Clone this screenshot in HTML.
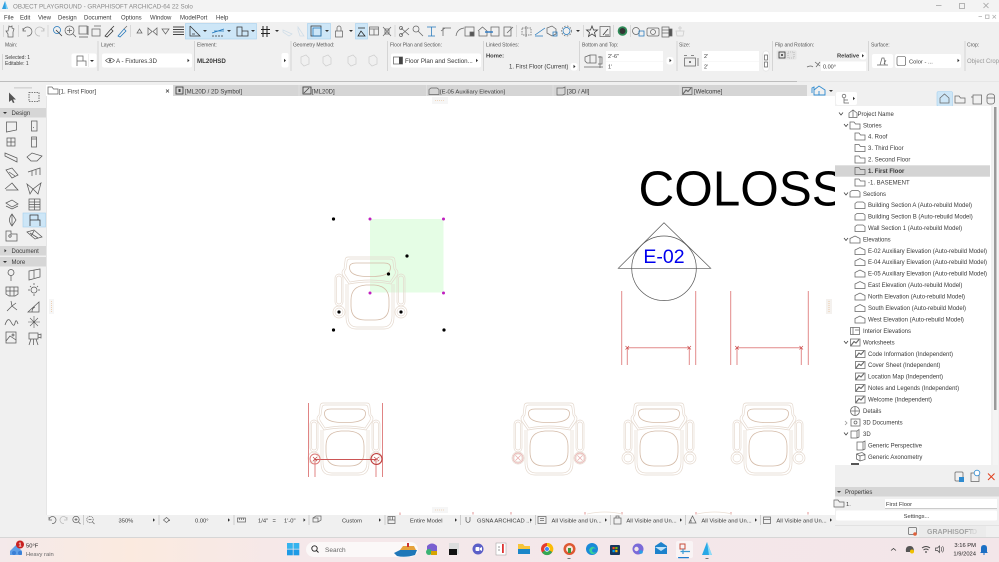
<!DOCTYPE html>
<html><head><meta charset="utf-8"><title>ARCHICAD</title>
<style>
html,body{margin:0;padding:0;width:999px;height:562px;overflow:hidden;background:#fff}
svg{display:block;font-family:"Liberation Sans",sans-serif}
#root{filter:blur(.28px)}
text{fill:#3a3a3a;font-size:6px}
.l{font-size:5px;fill:#555}
.i{fill:none;stroke:#666;stroke-width:.75}
.p{fill:none;stroke:#d0d0d0;stroke-width:.8}
.c path,.c rect,.c circle{fill:none;stroke:#e4d7cc;stroke-width:.65}
.c .d{stroke:#d4bba8;stroke-width:.8}
</style></head><body>
<svg id="root" width="999" height="562" viewBox="0 0 999 562" xmlns="http://www.w3.org/2000/svg">
<defs>
<polygon id="ar" points="0,-1.7 2,0 0,1.7" fill="#333"/>
<polygon id="ad" points="-2,0 2,0 0,2" fill="#333"/>
<g id="fold" class="i"><path d="M-5 3.500V-3.500H-1L.5-1.500H5V3.500Z"/></g>
<g id="sect" class="i"><path d="M-5 3.500V-1.500L-3-3H3L5-1.500V3.500Z"/></g>
<g id="elev" class="i"><path d="M-5 3.500V-1L0-3.500L5-1V3.500Z"/></g>
<g id="ws" class="i"><rect x="-4.500" y="-3.500" width="9.500" height="7"/><path d="M-4 3L-1-1L1 .5L4-3" stroke-width="1.100"/></g>
<g id="chair" class="c">
<path d="M-22 0Q-25 0-25 4L-26 12Q-30 15-26 20L-21 27Q0 23 21 27L26 20Q30 15 26 12L25 4Q25 0 22 0Z"/>
<path d="M-20 2Q-23 2-23 5L-24 12Q-27 15-24 19L-20 25Q0 21 20 25L24 19Q27 15 24 12L23 5Q23 2 20 2Z"/>
<path class="d" d="M-14 6H14Q20.500 6 20.500 10.500Q20.500 19 4 19.500H-4Q-20.500 19-20.500 10.500Q-20.500 6-14 6Z"/>
<rect x="-35" y="17" width="8" height="32" rx="4"/><rect x="27" y="17" width="8" height="32" rx="4"/>
<rect x="-33.500" y="19" width="5" height="28" rx="2.500"/><rect x="28.500" y="19" width="5" height="28" rx="2.500"/>
<path class="d" d="M-4 28H4Q19 29 19 43V49Q19 63 5 63H-5Q-19 63-19 49V43Q-19 29-4 28Z"/>
<path d="M-24 27V60Q-24 72-14 72H14Q24 72 24 60V27"/>
<path d="M-22 27V59Q-22 70-13 70H13Q22 70 22 59V27"/>
<circle cx="-31" cy="55" r="6"/><circle cx="31" cy="55" r="6"/><circle cx="-31" cy="55" r="4"/><circle cx="31" cy="55" r="4"/>
</g>
</defs>

<!-- base -->
<rect width="999" height="562" fill="#f0f0f0"/>
<rect y="0" width="999" height="12" fill="#f3f3f3"/>
<rect y="12" width="999" height="10" fill="#fff"/>

<!-- title -->
<path d="M5 1L2 9H8Z" fill="#2d9fe0"/><path d="M5 1L8 9H6Z" fill="#7fd0f5"/>
<text x="13" y="8.500" style="font-size:6.200px;fill:#8a8a8a">OBJECT PLAYGROUND - GRAPHISOFT ARCHICAD-64 22 Solo</text>
<path d="M936 5.500H941.500" stroke="#999" stroke-width=".7"/>
<rect x="959.500" y="3.500" width="5" height="5" fill="none" stroke="#999" stroke-width=".7"/>
<path d="M983.500 3L988.500 8M988.500 3L983.500 8" stroke="#999" stroke-width=".7"/>
<path d="M978.500 16.500H982" stroke="#aaa" stroke-width=".7"/>
<rect x="985.500" y="15" width="3.500" height="3.500" fill="none" stroke="#aaa" stroke-width=".7"/>
<path d="M992.500 15L996 18.500M996 15L992.500 18.500" stroke="#aaa" stroke-width=".7"/>

<!-- menu -->
<g style="font-size:6px">
<text x="4" y="19.500">File</text><text x="20" y="19.500">Edit</text><text x="38" y="19.500">View</text><text x="58" y="19.500">Design</text><text x="84" y="19.500">Document</text><text x="121" y="19.500">Options</text><text x="150" y="19.500">Window</text><text x="180" y="19.500">ModelPort</text><text x="216" y="19.500">Help</text>
</g>

<!-- toolbar highlights -->
<rect x="185.500" y="23.500" width="71" height="15.500" fill="#cde6f7" stroke="#a5d0ef" stroke-width=".6"/>
<rect x="307.500" y="23.500" width="23" height="15.500" fill="#cde6f7" stroke="#a5d0ef" stroke-width=".6"/>
<rect x="355.500" y="23.500" width="12" height="15.500" fill="#cde6f7" stroke="#a5d0ef" stroke-width=".6"/>
<path d="M3.500 25V37M18.500 25V37M48 25V37M130.500 25V37M395 25V37M516.500 25V37M583.500 25V37M613.500 25V37M630.500 25V37" stroke="#c8c8c8" stroke-width=".6"/>

<!-- toolbar icons -->
<g class="i">
<path d="M6 31L8 34V37H13V32L14 29L12 28V26L10 27L9 26L8 31Z"/>
<path d="M23 31A4.500 4.500 0 1 1 27 36M23 28V31H26"/>
<path d="M44 31A4.500 4.500 0 1 0 40 36M44 28V31H41" stroke="#bbb"/>
<circle cx="57" cy="30" r="3.500" stroke="#2277bb"/><path d="M56 30L62 36" stroke="#333"/>
<circle cx="69.500" cy="30.500" r="4.500"/><path d="M73 34L76 37M67 30.500H72M69.500 28V33"/>
<rect x="79" y="26" width="8" height="8"/><path d="M79 37H88M88 26V35" stroke="#555"/>
<path d="M92 29H100V36H92ZM94 26H101"/><path d="M105 36L111 29L113 31L107 37ZM111 29L114 26" stroke="#333"/><path d="M118 36L124 29L126 31L120 37Z" stroke="#2277bb"/><path d="M124 29L127 26"/>
<path d="M137 33H142L139.500 29Z"/><path d="M148 28V35L152 31.500ZM157 28V35L153 31.500Z"/><path d="M162 29H169L165.500 34Z"/>
<path d="M173 27H184M173 29.500H184M173 32H184M173 34.500H184" stroke-width=".9" stroke="#444"/>
<path d="M190 26V36H200L190 26M192 34H195" stroke="#333"/>
<path d="M212 33L224 29M214 31H224" stroke="#2277bb"/><path d="M212 36H224" stroke="#333" stroke-dasharray="2 1"/>
<path d="M237 27H242V36H237ZM242 31H248V36H242" stroke="#333"/>
<path d="M263 26V37M267 26V37M261 29.500H270M261 33.500H270" stroke="#222" stroke-width="1"/>
<path d="M283 30L292 34L289 36L283 32Z" stroke="#cfdde8"/><path d="M298 27L304 36L300 36L298 30Z" stroke="#cfdde8"/>
<rect x="311" y="26" width="10" height="10" stroke="#333"/><rect x="313" y="28" width="8" height="8" stroke="#2277bb"/>
<rect x="335.500" y="31" width="7" height="6"/><path d="M337 31V28A2 2 0 0 1 341 28V31"/>
<path d="M358 28H365M358 36H365L361 31Z" stroke="#222"/>
<rect x="369.500" y="27" width="9" height="8"/><path d="M369.500 29H378.500M374 29V35"/>
<path d="M383 27L391 36M391 27L383 36" stroke-width=".7"/><rect x="385" y="29" width="4" height="5"/>
<path d="M401 28L409 35M401 35L409 28"/><circle cx="401" cy="28" r="1.500"/><circle cx="401" cy="35" r="1.500"/>
<circle cx="416" cy="29" r="3"/><path d="M418 31L423 36"/>
<path d="M427 27H436M431.500 27V36M428 36H435" stroke="#2277bb"/>
<path d="M443 36V28H451M441 31L445 28"/><path d="M456 36Q457 29 464 28"/>
<rect x="465" y="27" width="9" height="9"/><rect x="470" y="32" width="4" height="4" fill="#555"/>
<path d="M478 31L482.500 27L487 31V36H479V31"/><rect x="491" y="27" width="8" height="9"/><path d="M485 32H493" stroke="#1b6fc0" stroke-width="1.300"/>
<path d="M504 27H511V36H504ZM507 33L513 27"/>
<path d="M522 28H531V35H522Z" stroke-dasharray="1.500 1"/><path d="M526 26V37"/>
<path d="M535 35L545 28M535 36H543" stroke="#2277bb"/>
<path d="M547 33V28L552 26L556 29V34L552 36Z"/><rect x="553" y="32" width="4" height="4" stroke="#2277bb"/>
<circle cx="566.500" cy="31" r="3.500" stroke="#2277bb"/><circle cx="566.500" cy="31" r="5" stroke-dasharray="1.500 1.500"/>
<path d="M592 26L593.500 30H597.500L594.500 32.500L595.500 36.500L592 34L588.500 36.500L589.500 32.500L586.500 30H590.500Z" stroke="#333"/>
<rect x="600" y="26.500" width="10" height="10"/><path d="M603 35L608 29M605 35H609" stroke="#333"/>
<circle cx="636" cy="31" r="3.500"/><rect x="639" y="31" width="5" height="5" stroke="#2277bb"/>
<rect x="647" y="28" width="12" height="8" rx="1.500"/><circle cx="653" cy="32" r="2.500"/>
<path d="M662 27H669V37H662ZM662 30H669M662 33H669"/><rect x="669" y="29" width="3" height="7" fill="#555"/>
<path d="M676 31H684L683 36H677ZM680 31V26M678 28H682" stroke="#ccc"/>
</g>
<circle cx="622.500" cy="31" r="4.800" fill="#2e8b57"/><circle cx="622.500" cy="31" r="3" fill="#333"/>
<g>
<use href="#ad" x="205" y="30"/><use href="#ad" x="229" y="30"/><use href="#ad" x="253" y="30"/><use href="#ad" x="277" y="30"/><use href="#ad" x="327" y="30"/><use href="#ad" x="351" y="30"/><use href="#ad" x="578" y="30"/>
</g>

<!-- info box separators -->
<path d="M98 41V71M194.500 41V71M291 41V71M387.500 41V71M483.500 41V71M579.500 41V71M677 41V71M772.500 41V71M868.500 41V71M965 41V71" stroke="#cfcfcf" stroke-width=".8"/>
<path d="M2.500 54V70" stroke="#cfcfcf" stroke-width=".8"/>
<g class="l">
<text class="l" x="5" y="46.500">Main:</text><text class="l" x="101" y="46.500">Layer:</text><text class="l" x="197" y="46.500">Element:</text><text class="l" x="293" y="46.500">Geometry Method:</text><text class="l" x="390" y="46.500">Floor Plan and Section:</text><text class="l" x="486" y="46.500">Linked Stories:</text><text class="l" x="582" y="46.500">Bottom and Top:</text><text class="l" x="679" y="46.500">Size:</text><text class="l" x="775" y="46.500">Flip and Rotation:</text><text class="l" x="871" y="46.500">Surface:</text><text class="l" x="967" y="46.500">Crop:</text>
</g>
<text x="5" y="59" style="font-size:5px">Selected: 1</text><text x="5" y="65" style="font-size:5px">Editable: 1</text>
<rect x="71.500" y="53.500" width="25" height="14" rx="2" fill="#fff"/>
<path d="M77 56H83V61H77ZM77 61V66M83 61H86V66" class="i"/><use href="#ad" x="92" y="60"/><path d="M88.500 54V67" stroke="#ddd" stroke-width=".5"/>
<rect x="102" y="53.500" width="90" height="14" rx="2" fill="#fff"/>
<path d="M105.500 60.500Q110 56 114.500 60.500Q110 65 105.500 60.500Z" class="i"/><circle cx="110" cy="60.500" r="1.200" fill="#555"/>
<text x="116" y="63" style="font-size:6.200px">A - Fixtures.3D</text><use href="#ar" x="187.500" y="60.500"/>
<text x="197" y="63" style="font-size:6.200px;font-weight:bold">ML20HSD</text>
<rect x="281.500" y="53" width="7" height="14.500" rx="2" fill="#fff"/><use href="#ar" x="284" y="60.500"/>
<g class="p"><path d="M301 57L306 55L309 58V64L304 66L301 63Z"/><path d="M323 57L328 55L331 58V64L326 66L323 63Z"/><path d="M348 57L353 55L356 58V64L351 66L348 63Z"/><path d="M369 57L374 55L377 58V64L372 66L369 63Z"/></g>
<rect x="391" y="53.500" width="90" height="14" rx="2" fill="#fff"/>
<path d="M393.500 57H402.500V64H393.500Z" class="i"/><rect x="399" y="57" width="3.500" height="7" fill="#444"/>
<text x="405" y="63" style="font-size:6.200px">Floor Plan and Section...</text><use href="#ar" x="476" y="60.500"/>
<text x="486" y="57.500" style="font-size:5.800px;font-weight:bold">Home:</text>
<text x="509" y="68.500" style="font-size:6px">1. First Floor (Current)</text>
<rect x="570.500" y="63" width="7" height="7.500" rx="2.500" fill="#fff"/><use href="#ar" x="573.500" y="66.500"/>
<path d="M585 57L590 55H596V63H587L585 61ZM590 55V63M598 57H602V64H598M584 67H603M600 56V68" class="i"/>
<rect x="606" y="51" width="57" height="10" fill="#fff"/><rect x="606" y="61.500" width="57" height="9.500" fill="#fff"/>
<text x="608" y="58" style="font-size:5.500px">2'-6"</text><text x="608" y="68.500" style="font-size:5.500px">1'</text>
<rect x="666.500" y="57" width="7" height="7.500" rx="2.500" fill="#fff"/><use href="#ar" x="669.500" y="60.500"/>
<rect x="684.500" y="58" width="11" height="8" class="i"/><circle cx="690" cy="62" r="1" fill="#555"/><path d="M684 55.500H687M691 55.500H694M698 58V66" class="i"/>
<rect x="702" y="51" width="57" height="10" fill="#fff"/><rect x="702" y="61.500" width="57" height="9.500" fill="#fff"/>
<text x="704" y="58" style="font-size:5.500px">2'</text><text x="704" y="68.500" style="font-size:5.500px">2'</text>
<rect x="763" y="51" width="6" height="20" rx="2.500" fill="#fff" stroke="#ccc" stroke-width=".4"/><path d="M764.500 55H767.500V60H764.500ZM764.500 62H767.500V67H764.500Z" class="i"/>
<rect x="776.500" y="50.500" width="20" height="9" rx="1" fill="#e5e5e5"/>
<rect x="779" y="52" width="6" height="6" fill="none" stroke="#333" stroke-width=".8"/><circle cx="782" cy="55" r="1" fill="#333"/><rect x="788" y="52" width="6" height="6" fill="none" stroke="#999" stroke-width=".6" stroke-dasharray="1 1"/>
<text x="837" y="57.500" style="font-size:5.800px;font-weight:bold">Relative</text>
<rect x="859.500" y="52" width="7" height="7.500" rx="2.500" fill="#fff"/><use href="#ar" x="862" y="55.700"/>
<path d="M807 67Q811 65 813 67M815 62L820 66M816 67L820 62" class="i"/>
<rect x="821" y="61.500" width="45" height="9.500" fill="#fff"/><text x="823" y="68.500" style="font-size:5.500px">0.00°</text>
<rect x="872" y="54" width="21" height="14" rx="2" fill="#fff"/><path d="M877 65H888M880 65L882 58H884L885 65M886 60L884 64" class="i"/>
<rect x="895" y="54" width="66" height="14" rx="2" fill="#fff"/><rect x="897" y="56.500" width="8.500" height="9" rx="1.500" fill="#fff" stroke="#444" stroke-width=".6"/>
<text x="909" y="63.500" style="font-size:5.800px">Color - ...</text><use href="#ar" x="957.500" y="60.500"/>
<text x="967" y="63" style="font-size:6px;fill:#999">Object Crop</text>

<!-- divider -->
<rect x="0" y="81" width="797" height="1" fill="#bdbdbd"/><rect x="797" y="81" width="202" height=".6" fill="#dedede"/>
<rect x="899" y="87" width="37" height=".8" fill="#bbb"/>

<!-- tabs -->
<rect x="46" y="85" width="127" height="12" fill="#fff"/>
<rect x="173" y="85" width="634" height="11" fill="#d5d5d5"/>
<path d="M299 85V96M426.500 85V96M553 85V96M680 85V96" stroke="#e4e4e4" stroke-width=".7"/>
<use href="#fold" x="53" y="90.500"/><text x="59" y="93.500" style="font-size:6px">[1. First Floor]</text>
<path d="M166 89.500L169 92.500M169 89.500L166 92.500" stroke="#333" stroke-width=".7"/>
<rect x="176" y="87" width="7" height="7" fill="none" stroke="#444" stroke-width=".9"/><rect x="178.500" y="89" width="2" height="3" fill="#444"/>
<text x="185" y="93.500" style="font-size:6px">[ML20D / 2D Symbol]</text>
<rect x="303" y="87" width="8" height="7" fill="none" stroke="#444" stroke-width=".9"/><path d="M304 93L309 88" stroke="#444" stroke-width=".8"/>
<text x="312" y="93.500" style="font-size:6px">[ML20D]</text>
<use href="#sect" x="434" y="91"/><text x="440" y="93.500" style="font-size:5.900px">[E-05 Auxiliary Elevation]</text>
<path d="M557 88H563L565 87V94L563 95H557Z" class="i"/><text x="567" y="93.500" style="font-size:6px">[3D / All]</text>
<use href="#ws" x="687" y="91"/><text x="694" y="93.500" style="font-size:6px">[Welcome]</text>
<path d="M812 93V88L814 87V93M814 90L819 86L825 90V95H814ZM819 95V91" fill="none" stroke="#2f8bd0" stroke-width=".9"/><use href="#ad" x="831" y="90"/>

<!-- canvas -->
<rect x="46" y="96" width="789" height="419" fill="#fff"/>
<rect x="46" y="96" width="1" height="419" fill="#e6e6e6"/>
<rect x="432" y="97" width="16" height="7" fill="#f6f6f6"/>
<path d="M435 100.500H445" stroke="#e8b888" stroke-width=".6" stroke-dasharray="1 1"/>
<rect x="49" y="299" width="5" height="15" fill="#f6f6f6"/><path d="M51.500 301V312" stroke="#e8b888" stroke-width=".6" stroke-dasharray="1 1"/>
<rect x="826" y="299" width="6" height="15" fill="#f4f1ee"/><path d="M829 301V312" stroke="#e8b888" stroke-width=".7" stroke-dasharray="1 1"/>
<rect x="432" y="507" width="16" height="6" fill="#f6f6f6"/><path d="M435 510H445" stroke="#e8b888" stroke-width=".6" stroke-dasharray="1 1"/>

<!-- selection -->
<rect x="370" y="219" width="73.500" height="73.500" fill="#e5fde5"/>
<use href="#chair" x="370" y="257"/>
<g fill="#c020c0"><circle cx="370" cy="219" r="1.500"/><circle cx="443.500" cy="219" r="1.500"/><circle cx="370" cy="293" r="1.500"/><circle cx="443.500" cy="293" r="1.500"/></g>
<g fill="#000"><circle cx="333.500" cy="219" r="1.600"/><circle cx="407" cy="256" r="1.600"/><circle cx="388.500" cy="274" r="1.600"/><circle cx="339" cy="312" r="1.600"/><circle cx="401" cy="312" r="1.600"/><circle cx="333.500" cy="330" r="1.600"/><circle cx="444" cy="330" r="1.600"/></g>

<!-- COLOSS + elevation -->
<svg x="46" y="96" width="789" height="419" viewBox="46 96 789 419" overflow="hidden">
<text x="638.500" y="205.500" style="font-size:49.500px;fill:#000">COLOSS</text>
</svg>
<path d="M664 222.700L710.700 268.300H618.300Z" fill="none" stroke="#555" stroke-width=".7"/>
<circle cx="664" cy="268.300" r="32.300" fill="none" stroke="#555" stroke-width=".7"/>
<text x="664" y="263" text-anchor="middle" style="font-size:19.500px;fill:#0000ee">E-02</text>
<g stroke="#e28a8a" fill="none" stroke-width="1">
<path d="M621.700 291V365M695.700 291V365M627.300 348V365M689.300 348V365M627.300 347.700H689.300"/>
<path d="M730.700 291V365M808.300 291V365M737 348V365M801.300 348V365M737 347.700H801.300"/>
</g>
<path d="M625.500 346L629 349.500M629 346L625.500 349.500M687.500 346L691 349.500M691 346L687.500 349.500M735.200 346L738.700 349.500M738.700 346L735.200 349.500M799.500 346L803 349.500M803 346L799.500 349.500" stroke="#c84040" stroke-width=".6"/>

<!-- chairs row -->
<use href="#chair" x="345" y="403"/><use href="#chair" x="549" y="403"/><use href="#chair" x="659" y="403"/><use href="#chair" x="768" y="403"/>
<g stroke="#dd7777" fill="none" stroke-width=".9">
<path d="M308.500 403V477M382.500 403V477M315 459V477M376 459V477"/>
<path d="M315 459.500H376" stroke="#cc5555"/>
<circle cx="315" cy="459" r="5"/><circle cx="376.500" cy="459" r="5.500" stroke="#c04040" stroke-width="1.100"/>
<path d="M313 457L317 461M317 457L313 461M374 457L379 461M379 457L374 461" stroke="#c04040" stroke-width=".7"/>
</g>
<g stroke="#e8a9a9" fill="none" stroke-width=".7">
<circle cx="518" cy="458" r="5"/><circle cx="580" cy="458" r="5"/><path d="M515.500 455.500L520.500 460.500M520.500 455.500L515.500 460.500M577.500 455.500L582.500 460.500M582.500 455.500L577.500 460.500"/>
</g>

<!-- left toolbox -->
<rect x="0" y="96" width="46" height="419" fill="#f0f0f0"/>
<rect x="0" y="85" width="46" height="11" fill="#f0f0f0"/>
<rect x="14" y="87.500" width="18" height=".8" fill="#bbb"/>
<path d="M9 92.500V102L11.500 100L13 103L14.500 102.500L13 99.500H16Z" fill="#555"/>
<rect x="29" y="92.500" width="10" height="9" fill="none" stroke="#555" stroke-width=".8" stroke-dasharray="1.500 1"/>
<rect x="0" y="108" width="46" height="9.500" fill="#d6d6d6"/><use href="#ad" x="5" y="112"/><text x="11.500" y="115" style="font-size:6px">Design</text>
<rect x="0" y="246" width="46" height="9.500" fill="#d6d6d6"/><use href="#ar" x="4.500" y="250.700"/><text x="11.500" y="253" style="font-size:6px">Document</text>
<rect x="0" y="257" width="46" height="9.500" fill="#d6d6d6"/><use href="#ad" x="5" y="261"/><text x="11.500" y="264" style="font-size:6px">More</text>
<rect x="23" y="213" width="22.500" height="14" fill="#cde6f7" stroke="#a5d0ef" stroke-width=".6"/>
<g class="i" style="stroke:#5a5a5a">
<path d="M6.500 122H16.500V130L6.500 132Z"/><path d="M31.500 121H37V131H31.500ZM33.500 127V128"/>
<path d="M7 138H15V146H7ZM11 138V146M7 142H15"/><path d="M31.500 137H36.500V147H31.500ZM31.500 139H36.500"/>
<path d="M5 153L17 158V162L5 156Z"/><path d="M27 157L32 153L42 156L37 161H31Z"/>
<path d="M6 170L12 168L18 175L12 178ZM9 172L15 176"/><path d="M28 172L40 168V175M32 171V176M36 170V175"/>
<path d="M5 189L12 183L18 190L6 190M12 183L16 188"/><path d="M27 184L33 189L41 183L38 194L33 189L30 194Z"/>
<path d="M6 203L12 200L18 204L12 207ZM6 206L12 209L18 206"/><rect x="29" y="199" width="11" height="11"/><path d="M29 204.500H40M34.500 199V210M29 202H40M29 207H40"/>
<path d="M12 214L16 220L12 226Q7 220 12 214ZM12 214V226"/><path d="M30 215H38V220H30ZM30 220V226M38 220H40V226" stroke="#333"/>
<path d="M6 231H11V234H17V241H6Z"/><circle cx="10" cy="236" r="1.200"/><path d="M27 232L34 230L42 237L35 239ZM30 233L38 238M34 231L31 236"/>
<circle cx="11" cy="272.500" r="3"/><path d="M11 275.500V281"/><path d="M29 271L40 269V277L29 280Z M34 270V278"/>
<path d="M6 287H18V294L15 296H9L6 294ZM10 287V296M14 287V296M6 291H18"/><circle cx="34" cy="290" r="3"/><path d="M34 283V285M28 290H30M38 290H40M30 286L31 287M38 286L37 287M33 295H35"/>
<path d="M7 311L12 306L16 303M12 306L11 301M12 306L17 310"/><path d="M28 312L39 302V312ZM32 312Q32 308 35 307"/>
<path d="M5 325Q8 316 11 322T15 323T18 324"/><path d="M34 316V328M28 322H40M30 318L38 326M38 318L30 326" stroke-width=".6"/>
<rect x="6" y="332" width="10" height="11"/><path d="M6 341L10 336L16 340"/><circle cx="13" cy="335" r="1"/><path d="M29 333H38V339H29ZM38 335L41 334V338L38 337ZM31 339L29 345M36 339L38 345M33.500 339V345"/>
</g>

<!-- status bar -->
<rect x="46" y="515" width="789" height="11" fill="#f0f0f0"/>
<path d="M83.500 515V525M159 515V525M234 515V525M309 515V525M385 515V525M460.600 515V525M535.600 515V525M610.500 515V525M685.500 515V525M760.500 515V525" stroke="#bbb" stroke-width=".7"/>
<g stroke="#d46a6a" stroke-width=".7"><path d="M400 512.500V515M473 512V514.500M511 512V514.500M585 512V514.500M622 512V514.500M696 512V514.500M731 512V514.500M808 512V514.500"/></g>
<path d="M587 514Q605 510 622 514M697 514Q715 510 732 514" fill="none" stroke="#eadfd4" stroke-width=".7"/>
<g class="i">
<path d="M49 520A3.500 3.500 0 1 1 52 523.500M49 517V520H52"/>
<path d="M67 520A3.500 3.500 0 1 0 64 523.500M67 517V520H64" stroke="#bbb"/>
<circle cx="76" cy="519.500" r="3.200"/><path d="M78.500 522L80.500 524M74.500 519.500H77.500M76 518V521"/>
<circle cx="90" cy="519.500" r="3.200" stroke-dasharray="1 .7"/><path d="M92.500 522L94.500 524M88.500 519.500H91.500"/>
<path d="M163.500 520L166.500 517.500L169.500 520L166.500 522.500ZM168 520.500H170"/>
<rect x="237.500" y="518" width="8" height="4"/><path d="M239.500 518V520M241.500 518V520M243.500 518V520"/>
<path d="M313 522V518L316 516H321V520L318 522ZM313 518H318V522"/>
<rect x="388" y="516.500" width="7" height="7"/><path d="M388 520H395M390 516.500V520M392.500 516.500V520"/>
<path d="M466 517V521Q468 524 470 521V517"/>
<rect x="538" y="516.500" width="8" height="7"/><path d="M540 518.500H544M540 520.500H544"/>
<path d="M614 518H621V524H614ZM616 518V516H619V518"/>
<path d="M689 523L692.500 516L696 523ZM691 523V520"/>
<rect x="763.500" y="517" width="7" height="6.500"/><path d="M763.500 519.500H770.500"/>
</g>
<g style="font-size:5.600px">
<text x="118.500" y="522.500" style="font-size:5.800px">350%</text>
<text x="195" y="522.500" style="font-size:5.800px">0.00°</text>
<text x="258" y="522.500" style="font-size:5.800px">1/4"</text><text x="272.500" y="522.500" style="font-size:5.800px">=</text><text x="284" y="522.500" style="font-size:5.800px">1'-0"</text>
<text x="342" y="522.500" style="font-size:5.800px">Custom</text>
<text x="410" y="522.500" style="font-size:5.800px">Entire Model</text>
<text x="477" y="522.500" style="font-size:5.800px">GSNA ARCHICAD ...</text>
<text x="551.500" y="522.500" style="font-size:5.800px">All Visible and Un...</text>
<text x="626.400" y="522.500" style="font-size:5.800px">All Visible and Un...</text>
<text x="701.400" y="522.500" style="font-size:5.800px">All Visible and Un...</text>
<text x="776.400" y="522.500" style="font-size:5.800px">All Visible and Un...</text>
</g>
<use href="#ar" x="153" y="520"/><use href="#ar" x="228" y="520"/><use href="#ar" x="303.500" y="520"/><use href="#ar" x="379" y="520"/><use href="#ar" x="455" y="520"/><use href="#ar" x="530" y="520"/><use href="#ar" x="605" y="520"/><use href="#ar" x="680" y="520"/><use href="#ar" x="755" y="520"/><use href="#ar" x="830" y="520"/>

<!-- right panel -->
<rect x="835" y="85" width="164" height="21" fill="#f0f0f0"/>
<rect x="836" y="92" width="21" height="13" rx="2" fill="#fff"/>
<circle cx="844" cy="96" r="1.800" class="i"/><path d="M844 98V103H849M844 100H848" class="i"/><use href="#ar" x="853" y="98.500"/>
<rect x="937" y="91.500" width="15.500" height="15" rx="1.500" fill="#cde6f7" stroke="#a5d0ef" stroke-width=".6"/>
<path d="M940 103V98L944.500 94L949 98V103ZM940 103H949" class="i"/>
<use href="#fold" x="960" y="99.500"/><rect x="973" y="95" width="8.500" height="9" class="i"/><path d="M971 97H973" class="i"/><rect x="987" y="94" width="7.500" height="10" rx="2.500" class="i"/><path d="M987 98H994.500" class="i"/>
<rect x="835" y="106" width="156" height="359" fill="#fff"/>
<rect x="993" y="106" width="5" height="359" fill="#f4f4f4"/><rect x="994" y="107" width="2.500" height="303" fill="#9a9a9a"/>
<rect x="835" y="165.300" width="155" height="11.400" fill="#d4d4d4"/>

<path d="M839 112.500L841 115L843 112.500M844 124L846 126.500L848 124M844 192.500L846 195L848 192.500M844 238L846 240.500L848 238M844 341L846 343.500L848 341M844 432.500L846 435L848 432.500" fill="none" stroke="#444" stroke-width=".8"/>
<path d="M845 421L847 423L845 425" fill="none" stroke="#999" stroke-width=".8"/>

<path d="M849 117.500V113L853 110L857 113V117.500Z" class="i"/><path d="M853 110V117" class="i"/>
<g>
<use href="#fold" x="855" y="125.500"/><use href="#fold" x="860" y="136.500"/><use href="#fold" x="860" y="148"/><use href="#fold" x="860" y="159.500"/><use href="#fold" x="860" y="171"/><use href="#fold" x="860" y="182.500"/>
<use href="#sect" x="855" y="193.500"/><use href="#sect" x="860" y="205"/><use href="#sect" x="860" y="216.500"/><use href="#sect" x="860" y="228"/>
<use href="#elev" x="855" y="239.500"/><use href="#elev" x="860" y="251"/><use href="#elev" x="860" y="262"/><use href="#elev" x="860" y="273.500"/><use href="#elev" x="860" y="285"/><use href="#elev" x="860" y="296.500"/><use href="#elev" x="860" y="308"/><use href="#elev" x="860" y="319.500"/>
<use href="#ws" x="855" y="342.500"/><use href="#ws" x="860" y="354"/><use href="#ws" x="860" y="365"/><use href="#ws" x="860" y="376.500"/><use href="#ws" x="860" y="388"/><use href="#ws" x="860" y="399.500"/>
</g>
<rect x="850.500" y="327.500" width="9" height="7" class="i"/><path d="M853 327.500V334.500M855 330H859" class="i"/>
<circle cx="855" cy="411" r="4.500" class="i"/><path d="M850.500 411H859.500M855 406.500V415.500" class="i"/>
<rect x="851" y="419" width="9" height="7" class="i"/><circle cx="855.500" cy="422.500" r="1.500" class="i"/>
<path d="M851 431H857L859 429.500V437L857 438H851ZM857 431V438" class="i"/>
<path d="M857 442H863L865 441V449L863 450H857ZM863 442V450" class="i"/>
<path d="M856.500 454L862 452.500L865 454.500V459.500L860 461L856.500 459ZM856.500 454L860 456V461M860 456L865 454.500" class="i"/>
<rect x="851" y="463" width="8" height="2" fill="#555"/>

<g style="font-size:6px">
<text x="857.500" y="116">Project Name</text>
<text x="863" y="127.500">Stories</text>
<text x="868" y="138.500">4. Roof</text>
<text x="868" y="150">3. Third Floor</text>
<text x="868" y="161.500">2. Second Floor</text>
<text x="868" y="173" style="font-weight:bold">1. First Floor</text>
<text x="868" y="184.500">-1. BASEMENT</text>
<text x="863" y="196">Sections</text>
<text x="868" y="207">Building Section A (Auto-rebuild Model)</text>
<text x="868" y="218.500">Building Section B (Auto-rebuild Model)</text>
<text x="868" y="230">Wall Section 1 (Auto-rebuild Model)</text>
<text x="863" y="241.500">Elevations</text>
<text x="868" y="253">E-02 Auxiliary Elevation (Auto-rebuild Model)</text>
<text x="868" y="264">E-04 Auxiliary Elevation (Auto-rebuild Model)</text>
<text x="868" y="275.500">E-05 Auxiliary Elevation (Auto-rebuild Model)</text>
<text x="868" y="287">East Elevation (Auto-rebuild Model)</text>
<text x="868" y="298.500">North Elevation (Auto-rebuild Model)</text>
<text x="868" y="310">South Elevation (Auto-rebuild Model)</text>
<text x="868" y="321.500">West Elevation (Auto-rebuild Model)</text>
<text x="863" y="333">Interior Elevations</text>
<text x="863" y="344.500">Worksheets</text>
<text x="868" y="356">Code Information (Independent)</text>
<text x="868" y="367">Cover Sheet (Independent)</text>
<text x="868" y="378.500">Location Map (Independent)</text>
<text x="868" y="390">Notes and Legends (Independent)</text>
<text x="868" y="401.500">Welcome (Independent)</text>
<text x="863" y="413">Details</text>
<text x="863" y="424.500">3D Documents</text>
<text x="863" y="436">3D</text>
<text x="868" y="447.500">Generic Perspective</text>
<text x="868" y="459">Generic Axonometry</text>
</g>

<rect x="955" y="472" width="8" height="9" rx="1" class="i"/><rect x="959" y="477" width="5" height="5" fill="#2f8bd0"/>
<rect x="971" y="473" width="8" height="8.500" class="i"/><circle cx="977" cy="473" r="2.800" fill="#fff" stroke="#2f8bd0" stroke-width=".8"/>
<path d="M988 473.500L994.500 480M994.500 473.500L988 480" stroke="#e0401f" stroke-width="1"/>

<rect x="835" y="487" width="164" height="9.500" fill="#d6d6d6"/><use href="#ad" x="839" y="491"/><text x="845" y="494" style="font-size:6px">Properties</text>
<use href="#fold" x="839" y="503.500"/><text x="846" y="506" style="font-size:5.800px">1.</text>
<rect x="885" y="499" width="112" height="9.500" fill="#fff"/><rect x="885" y="508" width="112" height=".7" fill="#bbb"/>
<text x="886" y="506" style="font-size:5.800px">First Floor</text>
<rect x="836" y="510.500" width="161" height="10" rx="1.500" fill="#fff"/>
<text x="916.500" y="518" text-anchor="middle" style="font-size:5.800px">Settings...</text>
<rect x="835" y="525" width="164" height=".7" fill="#ddd"/>
<rect x="908.500" y="527.500" width="8" height="7" rx="1" class="i"/><circle cx="915" cy="534" r="1.800" fill="#e0603a"/>
<rect x="919" y="526" width="67" height="11" fill="#ebebeb"/>
<text x="927" y="534" style="font-size:7px;fill:#a3a3a3;font-weight:bold">GRAPHISOFT</text><text x="970" y="534" style="font-size:7px;fill:#d8d8d8;font-weight:bold">ID</text>

<!-- bottom strip -->
<rect y="526" width="835" height="11" fill="#f0f0f0"/>
<rect y="537" width="999" height=".8" fill="#cfcfcf"/>

<!-- taskbar -->
<linearGradient id="tb" x1="0" x2="1" y1="0" y2="0"><stop offset="0" stop-color="#f4e9ea"/><stop offset=".13" stop-color="#fbeadf"/><stop offset=".3" stop-color="#f5e8ea"/><stop offset="1" stop-color="#f3e6e9"/></linearGradient>
<rect y="538" width="999" height="24" fill="url(#tb)"/>
<path d="M10 551L16 545L22 551V555H10Z" fill="#5f9fe6"/><circle cx="14" cy="553" r="2" fill="#3a7fd6"/><circle cx="20" cy="553" r="2" fill="#3a7fd6"/>
<circle cx="20" cy="544.500" r="4" fill="#c8201f"/><text x="20" y="546.500" text-anchor="middle" style="font-size:5.500px;fill:#fff;font-weight:bold">1</text>
<text x="26" y="547.500" style="font-size:5.800px;fill:#222">50°F</text><text x="26" y="556" style="font-size:5.800px;fill:#666">Heavy rain</text>
<g fill="#1e9be6"><rect x="287" y="543" width="5.800" height="5.800" fill="#35b3ee"/><rect x="293.500" y="543" width="5.800" height="5.800" fill="#35b3ee"/><rect x="287" y="549.500" width="5.800" height="5.800"/><rect x="293.500" y="549.500" width="5.800" height="5.800"/></g>
<rect x="306" y="542" width="112" height="15" rx="7.500" fill="#fbf8f8"/>
<circle cx="314.500" cy="548.500" r="2.700" fill="none" stroke="#222" stroke-width=".9"/><path d="M316.500 550.500L318.500 552.500" stroke="#222" stroke-width="1"/>
<text x="325" y="552" style="font-size:6.500px;fill:#666">Search</text>
<path d="M394 553L400 550H417L415 555Q405 558 397 556Z" fill="#1f77b8"/><path d="M400 550L403 546H414L416 550Z" fill="#e6a23c"/><rect x="407" y="543" width="2" height="4" fill="#c33"/>

<!-- task icons -->
<path d="M427 546Q432 541 437 546L437 553H427Z" fill="#7a5fd0"/><circle cx="429" cy="552" r="3" fill="#3bb273"/><rect x="431" y="551" width="6" height="4" fill="#d6a400"/>
<rect x="449" y="543" width="10" height="11" fill="#ddd"/><rect x="449" y="549" width="8" height="6" fill="#111"/>
<circle cx="478" cy="549" r="5.500" fill="#5b5fc7"/><rect x="475.500" y="547" width="4" height="4" rx="1" fill="#fff"/><path d="M480 548L482 547V551L480 550Z" fill="#fff"/>
<rect x="496" y="543" width="10" height="12" fill="#fff" stroke="#999" stroke-width=".5"/><rect x="502" y="544" width="1.800" height="9" fill="#d33"/><path d="M498 547H500M498 550H500" stroke="#777" stroke-width=".8"/>
<path d="M518 544H523L524.500 546H530V554H518Z" fill="#f8c53a"/><rect x="518" y="549" width="12" height="5" fill="#1a86c8"/>
<circle cx="547" cy="549" r="6" fill="#e33b2e"/><path d="M547 549L552.200 552A6 6 0 0 1 542 552.500Z" fill="#34a853"/><path d="M547 543A6 6 0 0 1 552.500 552L547 549Z" fill="#fbbc05"/><circle cx="547" cy="549" r="2.700" fill="#fff"/><circle cx="547" cy="549" r="2" fill="#4285f4"/>
<circle cx="569.500" cy="549" r="6" fill="#de5833"/><circle cx="569.500" cy="549" r="3.500" fill="#f7e7dd"/><rect x="568" y="548" width="3" height="5" fill="#3a9a3f"/>
<circle cx="592" cy="549" r="6" fill="#1a8ad8"/><path d="M589 550Q592 544 596 549Q593 547 592 550Q592 554 597 552Q591 557 589 550Z" fill="#38d19a"/>
<rect x="610" y="545" width="10" height="10" rx="1" fill="#17375e"/><rect x="612.500" y="547" width="2.200" height="2.200" fill="#f25022"/><rect x="615.300" y="547" width="2.200" height="2.200" fill="#7fba00"/><rect x="612.500" y="550" width="2.200" height="2.200" fill="#00a4ef"/><rect x="615.300" y="550" width="2.200" height="2.200" fill="#ffb900"/>
<circle cx="638" cy="549" r="5.500" fill="#7b6ad8"/><circle cx="636.500" cy="549" r="2.200" fill="#f3e6e9"/><circle cx="641" cy="552" r="1.800" fill="#29a0e8"/>
<path d="M655 546L661 542L667 546V554H655Z" fill="#1d82cc"/><path d="M655 547L661 551L667 547" fill="#bfe2f7"/>
<rect x="676" y="541" width="17" height="17" rx="2" fill="#f9f4f5"/>
<path d="M680 544H685V549H680Z" fill="none" stroke="#c64c3c" stroke-width="1"/><path d="M683 549V554M680.500 551.500H690" stroke="#3b9ad4" stroke-width="1.200"/><rect x="678" y="557" width="11" height="1.200" rx=".6" fill="#1d7ed0"/>
<path d="M707 542L702 555H712Z" fill="#29a8e6"/><path d="M707 542L712 555H709Z" fill="#8fdcf7"/><rect x="705.500" y="558" width="3" height="1" fill="#777"/>
<rect x="567.500" y="558" width="3" height="1" fill="#777"/>

<!-- tray -->
<path d="M891 550.500L893.500 548.500L896 550.500" fill="none" stroke="#333" stroke-width=".8"/>
<path d="M906 552Q905 546 910 546Q914 546 914 552Z" fill="#555"/><circle cx="912" cy="551.500" r="2" fill="#f2c100"/>
<path d="M922 548Q926 545 930 548M923.500 550Q926 548 928.500 550" fill="none" stroke="#444" stroke-width=".9"/><circle cx="926" cy="552" r=".9" fill="#444"/>
<path d="M935.500 548H937.500L939.500 546V552.500L937.500 550.500H935.500Z" fill="none" stroke="#444" stroke-width=".7"/><path d="M941 547Q942.500 549 941 551.500M942.500 546Q944.500 549 942.500 552.500" fill="none" stroke="#444" stroke-width=".6"/>
<text x="976" y="547" text-anchor="end" style="font-size:5.800px;fill:#222">3:16 PM</text><text x="976" y="555.500" text-anchor="end" style="font-size:5.800px;fill:#222">1/9/2024</text>
<path d="M981 552V548Q981 545 984 545Q987 545 987 548V552L988 553H980Z" fill="#1c6fc4"/><rect x="983" y="553.500" width="2" height="1" fill="#1c6fc4"/>
</svg>
</body></html>
